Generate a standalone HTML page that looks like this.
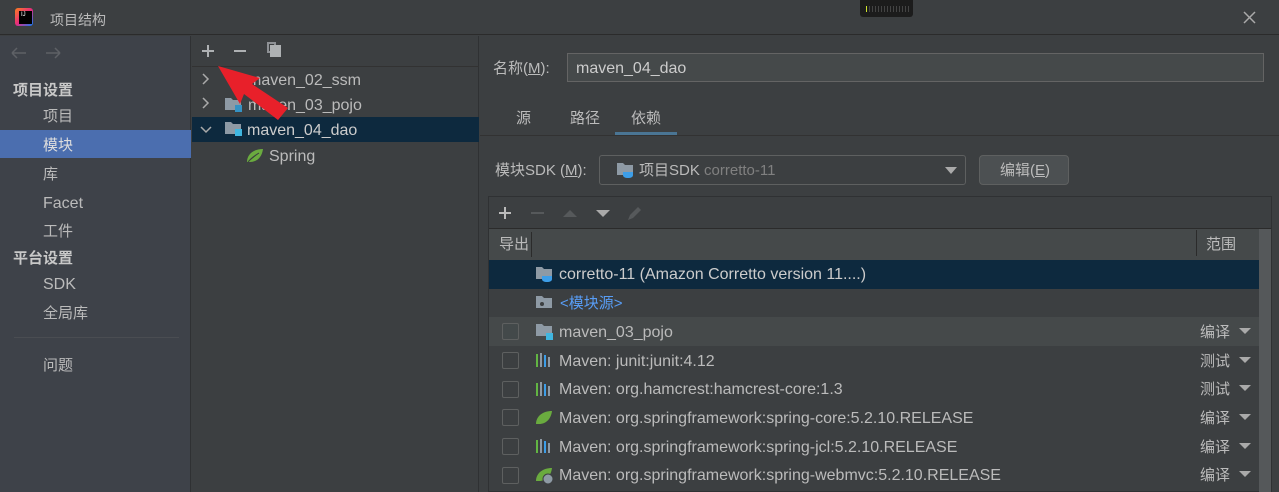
<!DOCTYPE html>
<html><head><meta charset="utf-8"><style>
*{margin:0;padding:0;box-sizing:border-box}
body{width:1279px;height:492px;overflow:hidden;background:#3c3f41;font-family:"Liberation Sans","Noto Sans CJK SC",sans-serif;color:#bbbbbb;font-size:15px;position:relative}
.a{position:absolute;white-space:nowrap}
.t{line-height:20px;margin-top:2px}
.l{font-size:16px}
</style></head><body>
<!-- title bar -->
<div class="a" style="left:0;top:0;width:1279px;height:35px;background:#3c3f41;border-bottom:1px solid #2b2b2b"></div>
<div class="a" style="left:15px;top:8px;width:18px;height:18px;background:linear-gradient(135deg,#fc801d,#e62b7d 50%,#087cfa);border-radius:3px"></div>
<div class="a" style="left:19px;top:11px;width:13px;height:13px;background:#000"></div>
<div class="a" style="left:21px;top:12px;font-size:6px;color:#fff;line-height:6px">IJ</div>
<div class="a t" style="left:50px;top:8px;font-size:14px;color:#bbb">项目结构</div>
<div class="a" style="left:860px;top:0;width:53px;height:17px;background:#1c1c1c;border-radius:0 0 3px 3px"></div>
<div class="a" style="left:866px;top:6px;width:1px;height:6px;background:#cfe32a"></div>
<div class="a" style="left:869px;top:6px;width:42px;height:6px;background:repeating-linear-gradient(90deg,#444 0 1px,transparent 1px 3px)"></div>
<svg class="a" style="left:1243px;top:11px" width="13" height="13"><path d="M1 1L12 12M12 1L1 12" stroke="#aaa" stroke-width="1.5"/></svg>

<!-- sidebar -->
<div class="a" style="left:0;top:36px;width:191px;height:456px;background:#3e4249;border-right:1px solid #2f3133"></div>
<svg class="a" style="left:10px;top:46px" width="55" height="14"><path d="M2 7h14M2 7l5-5M2 7l5 5M36 7h14M50 7l-5-5M50 7l-5 5" stroke="#5e6166" stroke-width="1.5" fill="none"/></svg>
<div class="a t" style="left:13px;top:79px;font-weight:bold;color:#c8c8c8">项目设置</div>
<div class="a t" style="left:43px;top:105px">项目</div>
<div class="a" style="left:0;top:130px;width:191px;height:28px;background:#4b6eaf"></div>
<div class="a t" style="left:43px;top:134px;color:#ddd">模块</div>
<div class="a t" style="left:43px;top:163px">库</div>
<div class="a t l" style="left:43px;top:192px">Facet</div>
<div class="a t" style="left:43px;top:220px">工件</div>
<div class="a t" style="left:13px;top:247px;font-weight:bold;color:#c8c8c8">平台设置</div>
<div class="a t l" style="left:43px;top:273px">SDK</div>
<div class="a t" style="left:43px;top:302px">全局库</div>
<div class="a" style="left:14px;top:337px;width:165px;height:1px;background:#4a4d52"></div>
<div class="a t" style="left:43px;top:354px">问题</div>

<!-- middle -->
<div class="a" style="left:192px;top:36px;width:287px;height:456px;background:#3c3f41;border-right:1px solid #2f3133"></div>
<div class="a" style="left:192px;top:66px;width:287px;height:1px;background:#323232"></div>
<svg class="a" style="left:201px;top:44px" width="14" height="14"><path d="M7 1v12M1 7h12" stroke="#aeb1b3" stroke-width="2"/></svg>
<div class="a" style="left:234px;top:50px;width:12px;height:2px;background:#aeb1b3"></div>
<div class="a" style="left:267px;top:42px;width:9px;height:11px;border:2px solid #8e9195"></div>
<div class="a" style="left:270px;top:45px;width:11px;height:12px;background:#aeb1b3"></div>
<div class="a" style="left:192px;top:117px;width:287px;height:25px;background:#0d293e"></div>
<svg class="a" style="left:200px;top:72px" width="12" height="70"><path d="M3 2L8 7L3 12M3 26L8 31L3 36M1 55L6 60L11 55" stroke="#aaa" stroke-width="1.5" fill="none"/></svg>
<svg class="a" style="left:224px;top:97px" width="20" height="44"><path d="M1 1h6l2 2h8v10H1z" fill="#8e9aa5"/><rect x="11" y="8" width="7" height="7" fill="#3592c4"/><path d="M1 25h6l2 2h8v10H1z" fill="#8e9aa5"/><rect x="11" y="32" width="7" height="7" fill="#40b6e0"/></svg>
<div class="a t l" style="left:248px;top:69px">maven_02_ssm</div>
<div class="a t l" style="left:248px;top:94px">maven_03_pojo</div>
<div class="a t l" style="left:247px;top:119px;color:#ccc">maven_04_dao</div>
<svg class="a" style="left:246px;top:148px" width="18" height="16"><path d="M1 14C1 6 8 1 17 1C16 9 11 14 4 14z" fill="#6aab3f"/><path d="M2 14C6 9 10 7 13 5" stroke="#3c3f41" stroke-width="1"/></svg>
<div class="a t l" style="left:269px;top:145px">Spring</div>
<!-- red arrow -->
<svg class="a" style="left:212px;top:62px" width="85" height="60"><path d="M6 4L48 16L40 22L76 46L66 58L32 32L28 42Z" fill="#e8202a"/></svg>

<!-- right panel -->
<div class="a t" style="left:493px;top:57px">名称(<u>M</u>):</div>
<div class="a" style="left:567px;top:53px;width:697px;height:29px;background:#45494a;border:1px solid #646464"></div>
<div class="a t l" style="left:576px;top:57px;color:#ccc">maven_04_dao</div>
<div class="a t" style="left:516px;top:107px">源</div>
<div class="a t" style="left:570px;top:107px">路径</div>
<div class="a t" style="left:631px;top:107px">依赖</div>
<div class="a" style="left:480px;top:135px;width:799px;height:1px;background:#323232"></div>
<div class="a" style="left:615px;top:132px;width:62px;height:3px;background:#4a7594"></div>
<div class="a t" style="left:495px;top:159px">模块SDK (<u>M</u>):</div>
<div class="a" style="left:599px;top:155px;width:367px;height:30px;background:#3c3f41;border:1px solid #5e6060;border-radius:3px"></div>
<svg class="a" style="left:616px;top:162px" width="20" height="16"><path d="M1 1h6l2 2h8v10H1z" fill="#8e9aa5"/><path d="M7 10h10v3c0 2-2 3-5 3s-5-1-5-3z" fill="#3d9ee8"/></svg>
<div class="a t" style="left:639px;top:159px">项目SDK <span style="color:#808080">corretto-11</span></div>
<svg class="a" style="left:945px;top:167px" width="12" height="8"><path d="M0 0h12L6 7z" fill="#aaa"/></svg>
<div class="a" style="left:979px;top:155px;width:90px;height:30px;background:#4c5052;border:1px solid #5e6060;border-radius:4px"></div>
<div class="a t" style="left:1000px;top:159px">编辑(<u>E</u>)</div>

<!-- table -->
<div class="a" style="left:488px;top:196px;width:784px;height:296px;background:#3c3f41;border:1px solid #2f3133"></div>
<div class="a" style="left:489px;top:228px;width:782px;height:1px;background:#2b2b2b"></div>
<svg class="a" style="left:498px;top:206px" width="14" height="14"><path d="M7 1v12M1 7h12" stroke="#bbb" stroke-width="2"/></svg>
<div class="a" style="left:531px;top:212px;width:13px;height:2px;background:#56595b"></div>
<svg class="a" style="left:562px;top:206px" width="80" height="16"><path d="M1 11L8 4L15 11z" fill="#56595b"/><path d="M34 4h14L41 11z" fill="#aaa"/><path d="M66 14l2-5 8-8 3 3-8 8z" fill="#56595b"/></svg>
<div class="a" style="left:489px;top:229px;width:770px;height:31px;background:#45494a"></div>
<div class="a" style="left:531px;top:232px;width:1px;height:25px;background:#2b2b2b"></div>
<div class="a" style="left:1196px;top:230px;width:1px;height:26px;background:#2b2b2b"></div>
<div class="a t" style="left:499px;top:233px">导出</div>
<div class="a t" style="left:1206px;top:233px">范围</div>
<div class="a" style="left:1259px;top:229px;width:12px;height:263px;background:#55585a"></div>
<div class="a" style="left:489px;top:260px;width:770px;height:29px;background:#0d293e"></div>
<div class="a" style="left:489px;top:317px;width:770px;height:29px;background:#45494a"></div>
<svg class="a" style="left:535px;top:266px" width="20" height="16"><path d="M1 1h6l2 2h8v10H1z" fill="#8e9aa5"/><path d="M7 10h10v3c0 2-2 3-5 3s-5-1-5-3z" fill="#3d9ee8"/></svg>
<div class="a t l" style="left:559px;top:263px;color:#ccc">corretto-11 (Amazon Corretto version 11....)</div>
<svg class="a" style="left:535px;top:295px" width="18" height="15"><path d="M1 1h6l2 2h8v10H1z" fill="#8e9aa5"/><circle cx="7" cy="9" r="2" fill="#3c3f41"/></svg>
<div class="a t" style="left:560px;top:292px;color:#589df6;font-size:15px">&lt;模块源&gt;</div>
<div class="a" style="left:502px;top:323px;width:17px;height:17px;border:1px solid #5e6060;border-radius:2px;background:#43494a"></div>
<svg class="a" style="left:535px;top:323px" width="20" height="18"><path d="M1 1h6l2 2h8v10H1z" fill="#8e9aa5"/><rect x="11" y="10" width="7" height="7" fill="#40b6e0"/></svg>
<div class="a t l" style="left:559px;top:321px">maven_03_pojo</div>
<div class="a t" style="left:1200px;top:321px">编译</div>
<svg class="a" style="left:1239px;top:328px" width="12" height="8"><path d="M0 0h12L6 6z" fill="#aaa"/></svg>

<div class="a" style="left:502px;top:352px;width:17px;height:17px;border:1px solid #5e6060;border-radius:2px"></div>
<div class="a" style="left:502px;top:381px;width:17px;height:17px;border:1px solid #5e6060;border-radius:2px"></div>
<div class="a" style="left:502px;top:409px;width:17px;height:17px;border:1px solid #5e6060;border-radius:2px"></div>
<div class="a" style="left:502px;top:438px;width:17px;height:17px;border:1px solid #5e6060;border-radius:2px"></div>
<div class="a" style="left:502px;top:467px;width:17px;height:17px;border:1px solid #5e6060;border-radius:2px"></div>
<svg class="a" style="left:535px;top:352px" width="20" height="16"><g id="m"><rect x="1" y="2" width="2" height="13" fill="#62b543"/><rect x="5" y="1" width="2" height="14" fill="#8e9aa5"/><rect x="9" y="3" width="2" height="12" fill="#3d9ee8"/><rect x="13" y="5" width="2" height="10" fill="#8e9aa5"/></g></svg>
<svg class="a" style="left:535px;top:381px" width="20" height="16"><use href="#m"/></svg>
<svg class="a" style="left:535px;top:438px" width="20" height="16"><use href="#m"/></svg>
<svg class="a" style="left:535px;top:410px" width="20" height="16"><path d="M1 14C1 6 8 1 17 1C16 9 11 14 4 14z" fill="#6aab3f"/></svg>
<svg class="a" style="left:535px;top:467px" width="20" height="18"><path d="M1 14C1 6 8 1 17 1C16 9 11 14 4 14z" fill="#6aab3f"/><circle cx="13" cy="12" r="5" fill="#8e9aa5" stroke="#3c3f41"/></svg>
<div class="a t l" style="left:559px;top:350px">Maven: junit:junit:4.12</div>
<div class="a t l" style="left:559px;top:378px">Maven: org.hamcrest:hamcrest-core:1.3</div>
<div class="a t l" style="left:559px;top:407px">Maven: org.springframework:spring-core:5.2.10.RELEASE</div>
<div class="a t l" style="left:559px;top:436px">Maven: org.springframework:spring-jcl:5.2.10.RELEASE</div>
<div class="a t l" style="left:559px;top:464px">Maven: org.springframework:spring-webmvc:5.2.10.RELEASE</div>
<div class="a t" style="left:1200px;top:350px">测试</div>
<div class="a t" style="left:1200px;top:378px">测试</div>
<div class="a t" style="left:1200px;top:407px">编译</div>
<div class="a t" style="left:1200px;top:436px">编译</div>
<div class="a t" style="left:1200px;top:464px">编译</div>
<svg class="a" style="left:1239px;top:357px" width="12" height="125"><g fill="#aaa"><path d="M0 0h12L6 6z"/><path d="M0 28h12L6 34z"/><path d="M0 57h12L6 63z"/><path d="M0 86h12L6 92z"/><path d="M0 114h12L6 120z"/></g></svg>
</body></html>
